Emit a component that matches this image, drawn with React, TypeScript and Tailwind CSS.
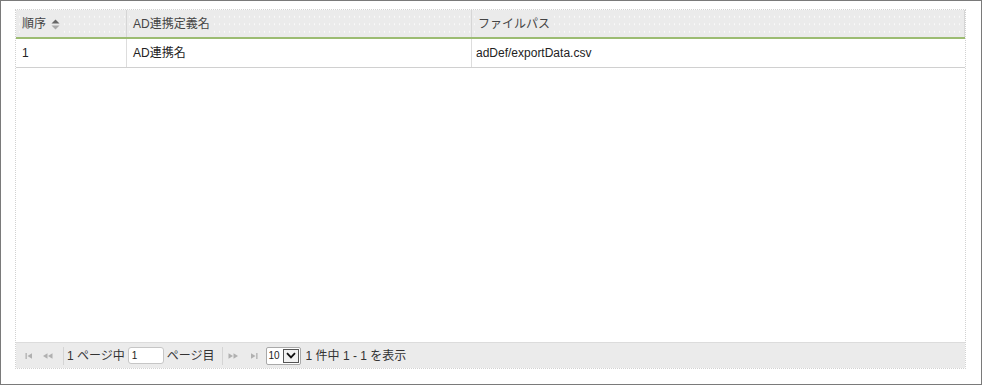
import React from 'react';

const COLS = [
  { label: 'AD連携定義名', w: 'w-[345px]' },
  { label: 'ファイルパス', w: 'flex-1' },
];

function SortIcon() {
  return (
    <svg width="9" height="11" viewBox="0 0 9 11" className="ml-1 inline-block">
      <path d="M4.5 0.5 L8.5 4.5 H0.5 Z" fill="#666" />
      <path d="M4.5 10.5 L8.5 6.5 H0.5 Z" fill="#aaa" />
    </svg>
  );
}

function PagerIcon({ kind }: { kind: 'first' | 'prev' | 'next' | 'last' }) {
  const c = '#b0b0b0';
  return (
    <svg width="12" height="8" viewBox="0 0 12 8">
      {kind === 'first' && (
        <>
          <rect x="1.5" y="1" width="1.3" height="6" fill={c} />
          <path d="M3.5 4 L8 1.2 V6.8 Z" fill={c} />
        </>
      )}
      {kind === 'prev' && (
        <>
          <path d="M1 4 L5.5 1.2 V6.8 Z" fill={c} />
          <path d="M6 4 L10.5 1.2 V6.8 Z" fill={c} />
        </>
      )}
      {kind === 'next' && (
        <>
          <path d="M6 4 L1.5 1.2 V6.8 Z" fill={c} />
          <path d="M11 4 L6.5 1.2 V6.8 Z" fill={c} />
        </>
      )}
      {kind === 'last' && (
        <>
          <path d="M8.5 4 L4 1.2 V6.8 Z" fill={c} />
          <rect x="9.2" y="1" width="1.3" height="6" fill={c} />
        </>
      )}
    </svg>
  );
}

function Sep({ className }: { className: string }) {
  return <span className={`h-[18px] w-px bg-[#d4d4d4] ${className}`} />;
}

function Pager() {
  return (
    <div className="flex h-[26px] items-center border-t border-[#dcdcdc] bg-[#ebebeb] pl-[8px] text-[12px] text-[#333]">
      <span className="flex w-[12px] justify-center"><PagerIcon kind="first" /></span>
      <span className="ml-[6px] flex w-[12px] justify-center"><PagerIcon kind="prev" /></span>
      <Sep className="ml-[9px]" />
      <span className="ml-[3px]">1 ページ中</span>
      <input
        readOnly
        value="1"
        className="mx-[3px] h-[17px] w-[36px] rounded-[3px] border border-[#c6c6c6] bg-white px-[3px] text-[10px] text-[#222] outline-none"
      />
      <span>ページ目</span>
      <Sep className="ml-[7px]" />
      <span className="ml-[4px] flex w-[12px] justify-center"><PagerIcon kind="next" /></span>
      <span className="ml-[8px] flex w-[12px] justify-center"><PagerIcon kind="last" /></span>
      <div className="ml-[7px] flex h-[18px] w-[35px] items-center rounded-[2px] border border-[#a9a9a9] bg-white">
        <span className="pl-[2px] text-[10px] leading-none text-[#222]">10</span>
        <span className="ml-auto mr-px flex h-[14px] w-[16px] items-center justify-center border border-[#555] bg-[#f2f2f2]">
          <svg width="10" height="7" viewBox="0 0 10 7">
            <path d="M1 1.2 L5 5.4 L9 1.2" fill="none" stroke="#111" strokeWidth="1.8" />
          </svg>
        </span>
      </div>
      <span className="ml-[5px]">1 件中 1 - 1 を表示</span>
    </div>
  );
}

export default function App() {
  return (
    <div
      className="h-[385px] w-[982px] border border-[#7a7a7a] bg-white pl-[14px] pt-[8px]"
      style={{ fontFamily: '"Liberation Sans", Arial, "Noto Sans CJK JP", sans-serif' }}
    >
      <div className="flex h-[360px] w-[951px] flex-col border border-dotted border-[#d2d2d2]">
        {/* header: light dotted texture on grey */}
        <div className="flex h-[29px] border-b-2 border-[#9cbc72] bg-[#ebebeb] bg-[radial-gradient(circle,#f9f9f9_0.6px,transparent_0.8px)] bg-[length:5px_7.5px] bg-[position:1px_3px] text-[12px] text-[#444]">
          <div className="flex w-[111px] items-center border-r border-[#d6d6d6] pl-[6px]">
            <span className="bg-[#ebebeb] pr-[1px]">順序</span>
            <span className="bg-[#ebebeb] pr-[1px]"><SortIcon /></span>
          </div>
          {COLS.map(({ label, w }) => (
            <div key={label} className={`flex items-center border-r border-[#d6d6d6] pl-[6px] ${w}`}>
              <span className="bg-[#ebebeb]">{label}</span>
            </div>
          ))}
        </div>

        {/* data row */}
        <div className="flex h-[29px] border-b border-[#d0d0d0] text-[12px] text-[#222]">
          <div className="flex w-[111px] items-center border-r border-[#dddddd] pl-[6px]">1</div>
          <div className="flex w-[345px] items-center border-r border-[#dddddd] pl-[6px]">AD連携名</div>
          <div className="flex flex-1 items-center pl-[4px]">adDef/exportData.csv</div>
        </div>

        <div className="flex-1" />

        <Pager />
      </div>
    </div>
  );
}
